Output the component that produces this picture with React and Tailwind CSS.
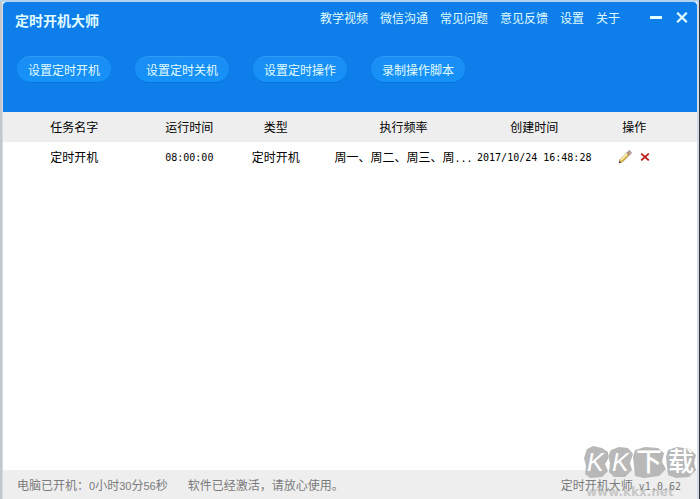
import React from "react";

const menu = ["教学视频", "微信沟通", "常见问题", "意见反馈", "设置", "关于"];
const actions = ["设置定时开机", "设置定时关机", "设置定时操作", "录制操作脚本"];

const columns = [
  { label: "任务名字", cls: "w-[20.5%]" },
  { label: "运行时间", cls: "w-[12.7%]" },
  { label: "类型", cls: "w-[14.5%] pr-4" },
  { label: "执行频率", cls: "w-[20%]" },
  { label: "创建时间", cls: "w-[17.7%]" },
  { label: "操作", cls: "pr-6" },
];

function Num({ children }) {
  return <span className="font-['DejaVu_Sans_Mono',monospace] text-[10px]">{children}</span>;
}

function Digits({ children }) {
  return <span className="text-[11px]">{children}</span>;
}

function Pencil() {
  return (
    <svg width="14" height="14" viewBox="0 0 14 14" aria-hidden="true">
      <path d="M1 13 L2 9.6 L9.2 2.4 L11.6 4.8 L4.4 12 Z" fill="#ecd067" stroke="#9a834a" strokeWidth="0.7" />
      <path d="M3 9.8 L9.6 3.2" stroke="#fff4b8" strokeWidth="1.3" />
      <path d="M4.2 11.4 L11 4.6" stroke="#b98d35" strokeWidth="0.9" />
      <path d="M9.4 2.2 L10.6 1 Q11.5 0.5 12.5 1.5 Q13.5 2.5 13 3.4 L11.8 4.6 Z" fill="#d9a08c" stroke="#6b6570" strokeWidth="0.7" />
      <path d="M8.6 3 L11 5.4" stroke="#8d8e96" strokeWidth="1" />
      <path d="M1 13 L1.7 10.8 L3.2 12.3 Z" fill="#3c3028" />
    </svg>
  );
}

function Watermark() {
  return (
    <svg
      className="pointer-events-none absolute right-0 bottom-0"
      width="120"
      height="54"
      viewBox="0 0 120 54"
      aria-hidden="true"
    >
      <g fill="#b8b8b8">
        <path d="M10 4 L16 1 L25 3 L31 7 L31 14 L28 19 L31 26 L25 32 L13 33 L8 29 L9 21 L7 13 Z" />
        <path d="M34 5 L42 2 L51 3 L56 9 L53 18 L55 25 L48 32 L37 32 L32 27 L33 18 L31 11 Z" />
        <path d="M58 5 L68 2 L81 3 L87 8 L85 17 L89 24 L82 31 L67 33 L58 31 L57 21 L56 12 Z" />
        <path d="M91 5 L100 2 L113 4 L119 10 L117 18 L119 25 L112 32 L99 33 L91 30 L90 22 L89 12 Z" />
      </g>
      <g fill="#ffffff" className="font-['Liberation_Sans','Noto_Sans_CJK_SC',sans-serif]">
        <text x="10" y="26" fontSize="25" fontStyle="italic">K</text>
        <text x="35" y="26" fontSize="25" fontStyle="italic">K</text>
        <text x="59" y="26" fontSize="26" fontWeight="500">下</text>
        <text x="91" y="26" fontSize="26" fontWeight="500">载</text>
      </g>
      <text
        x="9"
        y="51"
        fontSize="12"
        fontWeight="700"
        fill="#c8c8c8"
        className="font-['DejaVu_Sans',sans-serif]"
      >
        www.kkx.net
      </text>
    </svg>
  );
}

export default function App() {
  return (
    <div className="flex min-h-screen border-r border-[#30343a] bg-[#b4d3ee] pt-0.5 font-['Liberation_Sans','Noto_Sans_CJK_SC',sans-serif] text-xs text-black">
      <div className="w-0.5 bg-[#c5c8ca]" />
      <div className="relative flex min-w-0 flex-1 flex-col border-r-2 border-l border-[#d3dce6] bg-white">
        <header className="h-[110px] shrink-0 rounded-t-sm bg-[#0d7eea] text-[#e0fcff]">
          <div className="flex h-8 items-center pl-3">
            <h1 className="pt-1 font-['Noto_Sans_CJK_SC',sans-serif] text-sm font-bold">定时开机大师</h1>
            <nav className="ml-auto flex gap-3 pt-0.5">
              {menu.map((m) => (
                <a key={m} href="#" className="whitespace-nowrap">
                  {m}
                </a>
              ))}
            </nav>
            <div className="ml-7 flex items-center gap-3 pr-[9px]">
              <button type="button" aria-label="最小化" className="flex h-4 w-4 items-center justify-center">
                <svg width="12" height="12" viewBox="0 0 12 12">
                  <path d="M0 5.5 H12" stroke="currentColor" strokeWidth="3" />
                </svg>
              </button>
              <button type="button" aria-label="关闭" className="flex h-4 w-3 items-center justify-center">
                <svg width="12" height="12" viewBox="0 0 12 12">
                  <path d="M1.2 0.7 L10.8 10.3 M10.8 0.7 L1.2 10.3" stroke="currentColor" strokeWidth="2.2" />
                </svg>
              </button>
            </div>
          </div>
          <div className="flex gap-6 px-3.5 pt-[22px]">
            {actions.map((a) => (
              <button
                key={a}
                type="button"
                className="h-[27px] rounded-full border-t border-b border-t-[#2f9cf6] border-b-[#0b74dc] bg-linear-to-b from-[#1a8df3] to-[#1592f8] px-[11px] pt-0.5 whitespace-nowrap"
              >
                {a}
              </button>
            ))}
          </div>
        </header>
        <main className="flex-1">
          <table className="w-full table-fixed border-collapse text-center">
            <thead>
              <tr className="h-[30px] bg-[#eeeeee]">
                {columns.map((c) => (
                  <th key={c.label} scope="col" className={"p-0 pt-0.5 font-normal " + c.cls}>
                    {c.label}
                  </th>
                ))}
              </tr>
            </thead>
            <tbody>
              <tr className="h-[30px] whitespace-nowrap">
                <td className="pt-0.5">定时开机</td>
                <td>
                  <Num>08:00:00</Num>
                </td>
                <td className="pt-0.5 pr-4">定时开机</td>
                <td className="pt-0.5">
                  周一、周二、周三、周<Num>...</Num>
                </td>
                <td>
                  <Num>2017/10/24 16:48:28</Num>
                </td>
                <td className="pr-6">
                  <div className="flex items-center justify-center gap-2">
                    <button type="button" aria-label="编辑">
                      <Pencil />
                    </button>
                    <button type="button" aria-label="删除">
                      <svg width="10" height="8" viewBox="0 0 10 8">
                        <path d="M1.2 0.6 L8.8 7.4 M8.8 0.6 L1.2 7.4" stroke="#bb2020" strokeWidth="1.8" />
                      </svg>
                    </button>
                  </div>
                </td>
              </tr>
            </tbody>
          </table>
        </main>
        <footer className="flex h-[29px] shrink-0 items-center bg-[#eeeeee] pt-0.5 pr-4 pl-3.5 text-[#7b7b7b]">
          <span>
            电脑已开机：<Digits>0</Digits>小时<Digits>30</Digits>分<Digits>56</Digits>秒
          </span>
          <span className="ml-5">软件已经激活，请放心使用。</span>
          <span className="relative z-10 ml-auto">
            定时开机大师<Num> v1.0.62</Num>
          </span>
        </footer>
        <Watermark />
      </div>
    </div>
  );
}
